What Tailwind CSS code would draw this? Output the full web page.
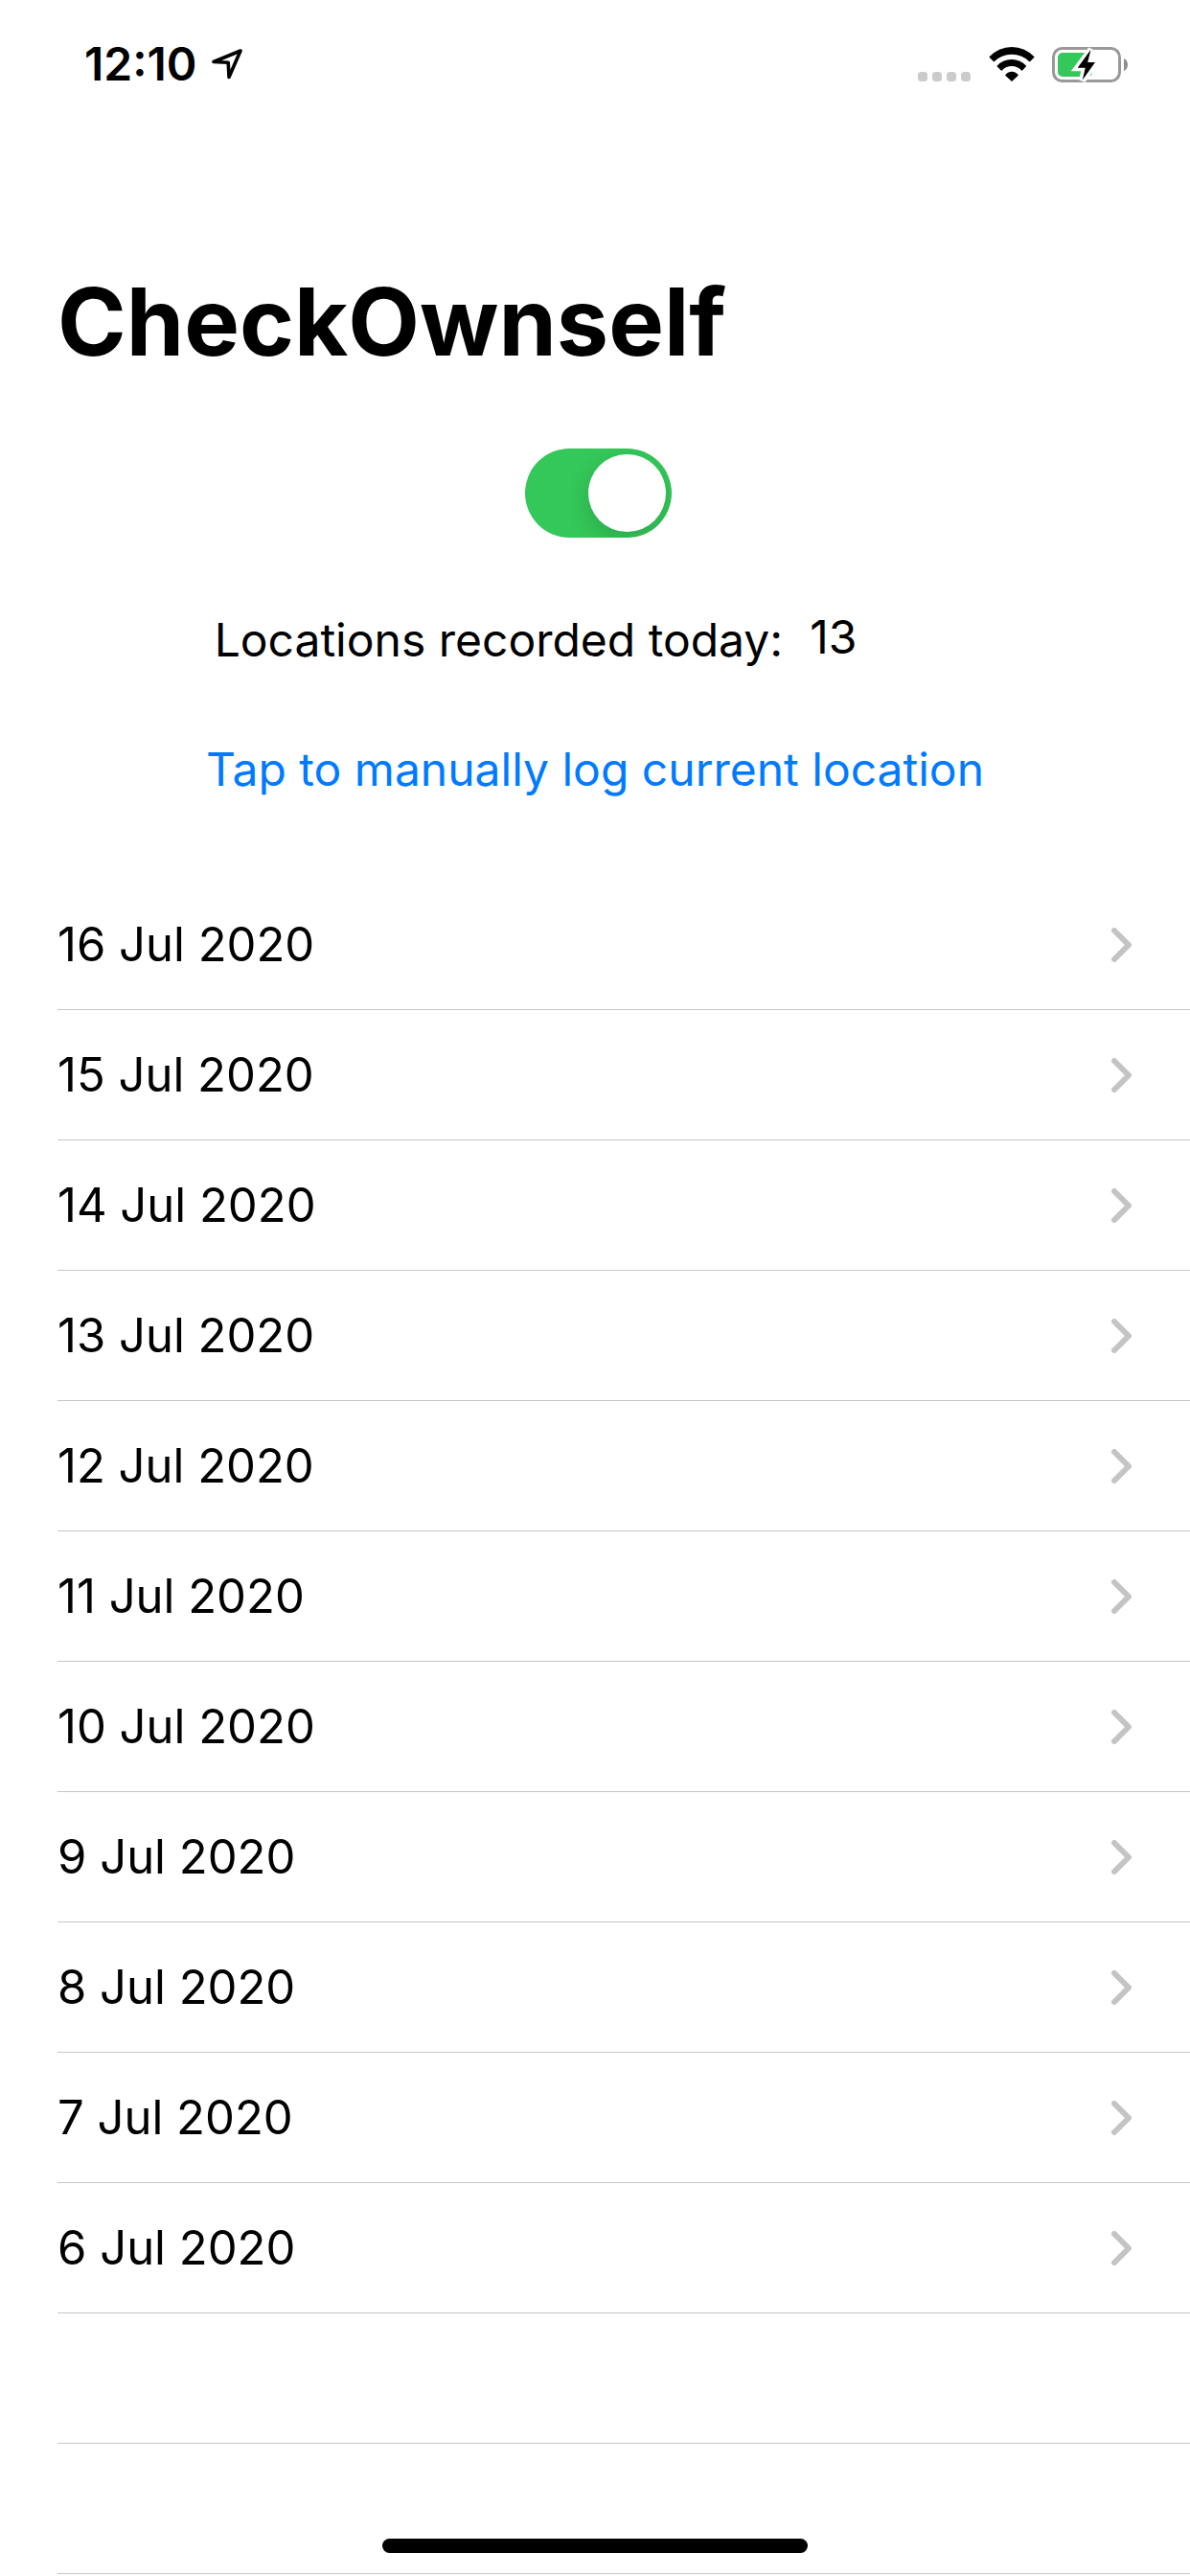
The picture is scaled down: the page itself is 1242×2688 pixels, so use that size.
<!DOCTYPE html>
<html lang="en">
<head>
  <meta charset="UTF-8">
  <meta name="viewport" content="width=device-width, initial-scale=1.0">
  <title>CheckOwnself</title>
  <script src="https://cdn.jsdelivr.net/npm/@tailwindcss/browser@4"></script>
</head>
<body class="relative min-h-screen overflow-x-hidden bg-white text-black font-['Inter',sans-serif] text-[48px] leading-[60px]">
  <!-- Status bar -->
  <header class="flex h-[134px] items-center justify-between pl-[88px] pr-[64px]">
    <div class="flex items-center gap-[16px]">
      <span class="font-semibold">12:10</span>
      <svg class="h-[32px] w-[33px]" viewBox="0 0 33 32" fill="none" stroke="#000" stroke-width="3.6" stroke-linejoin="round">
        <path d="M2 13.5 L30 2 L18 29.5 L17.2 14.3 Z"/>
      </svg>
    </div>
    <div class="flex items-center gap-[18px]">
      <svg class="h-[36px] w-[56px]" viewBox="0 0 56 36" fill="#cbcbcb">
        <rect x="0" y="26" width="10" height="10" rx="3.5"/>
        <rect x="15" y="26" width="10" height="10" rx="3.5"/>
        <rect x="30" y="26" width="10" height="10" rx="3.5"/>
        <rect x="45" y="26" width="10" height="10" rx="3.5"/>
      </svg>
      <svg class="h-[36px] w-[48px]" viewBox="0 0 48 36">
        <path d="M0.3 10.5 A32 32 0 0 1 47.7 10.5 L42.7 15.5 A26.5 26.5 0 0 0 5.3 15.5 Z"/>
        <path d="M8.3 20 A20.6 20.6 0 0 1 39.3 20 L34.5 25 A13.8 13.8 0 0 0 13.3 25 Z"/>
        <path d="M17 29.5 A8.5 8.5 0 0 1 31 29.5 L24 36 Z"/>
      </svg>
      <svg class="h-[37px] w-[80px]" viewBox="0 0 80 37">
        <rect x="1.5" y="1.5" width="69" height="34" rx="9" fill="none" stroke="#999" stroke-width="3"/>
        <path d="M75 12 C78 13.5 79 16 79 18.5 C79 21 78 23.5 75 25 Z" fill="#8c8c8c"/>
        <rect x="6" y="6" width="36" height="25" rx="5" fill="#34c759"/>
        <path d="M41 2.5 L26.7 21.7 L34.7 21.7 L31.5 35 L45 16 L37.2 16 Z" stroke="#fff" stroke-width="7"/>
        <path d="M40.5 2.7 L26.7 21.7 L34.7 21.7 L31.8 34.5 L45 16 L37.2 16 Z"/>
      </svg>
    </div>
  </header>

  <main>
    <h1 class="mt-[142px] px-[60px] text-[97px] leading-[120px] font-bold">CheckOwnself</h1>

    <!-- Tracking controls -->
    <section class="mt-[72px] flex flex-col items-center">
      <input type="checkbox" role="switch" checked aria-label="Record locations" class="ml-[6px] h-[93px] w-[153px] appearance-none overflow-hidden rounded-full bg-gray-200 p-[6px] checked:bg-[#34c759] before:block before:size-[81px] before:rounded-full before:bg-white before:shadow-[0_9px_24px_rgba(0,0,0,0.15)] checked:before:ml-auto">
      <p class="mt-[74px] mr-[124px] flex gap-[28px]"><span class="pt-[3px]">Locations recorded today:</span><span>13</span></p>
      <button type="button" class="mt-[75px] text-[#007aff]">Tap to manually log current location</button>
    </section>

    <ul class="mt-[85px] pl-[60px] text-[49px]">
    </ul>
  </main>

  <div class="fixed bottom-[24px] left-1/2 h-[15px] w-[444px] -translate-x-1/2 rounded-full bg-black"></div>

  <script>
    const days = [16, 15, 14, 13, 12, 11, 10, 9, 8, 7, 6];
    const list = document.querySelector('ul');

    // One row per recorded day
    days.forEach(day => {
      const row = document.createElement('li');
      row.innerHTML = `
        <a href="#" class="flex h-[136px] items-center justify-between border-b border-[#c6c6c8] pr-[60px]">
          <span>${day} Jul 2020</span>
          <svg class="h-[36px] w-[22px]" viewBox="0 0 22 36" fill="none" stroke="#c4c4c6" stroke-width="6" stroke-linecap="round" stroke-linejoin="round">
            <path d="M3 3 L18 18 L3 33"/>
          </svg>
        </a>`;
      list.appendChild(row);
    });

    // Empty rows below the data
    for (let i = 0; i < 2; i++) {
      const row = document.createElement('li');
      row.className = 'h-[136px] border-b border-[#c6c6c8]';
      list.appendChild(row);
    }
  </script>
</body>
</html>
